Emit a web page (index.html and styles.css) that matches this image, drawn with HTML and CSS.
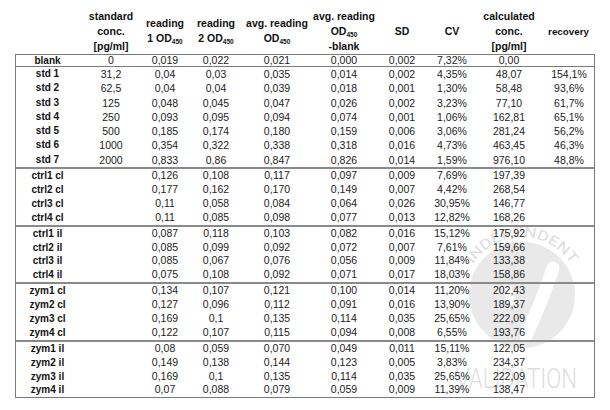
FILE: index.html
```html
<!DOCTYPE html>
<html>
<head>
<meta charset="utf-8">
<link rel="stylesheet" href="styles.css">
</head>
<body>
<div class="sheet">
  <div class="cols head">
    <div></div>
    <div>standard<br>conc.<br>[pg/ml]</div>
    <div>reading<br>1 OD<span class="sub">450</span></div>
    <div>reading<br>2 OD<span class="sub">450</span></div>
    <div>avg. reading<br>OD<span class="sub">450</span></div>
    <div>avg. reading<br>OD<span class="sub">450</span><br>-blank</div>
    <div>SD</div>
    <div>CV</div>
    <div>calculated<br>conc.<br>[pg/ml]</div>
    <div class="rec">recovery</div>
  </div>
  <div class="table">
    <div class="group blank">
      <div class="cols row"><div>blank</div><div>0</div><div>0,019</div><div>0,022</div><div>0,021</div><div>0,000</div><div>0,002</div><div>7,32%</div><div>0,00</div><div></div></div>
    </div>
    <div class="group std">
      <div class="cols row"><div>std 1</div><div>31,2</div><div>0,04</div><div>0,03</div><div>0,035</div><div>0,014</div><div>0,002</div><div>4,35%</div><div>48,07</div><div>154,1%</div></div>
      <div class="cols row"><div>std 2</div><div>62,5</div><div>0,04</div><div>0,04</div><div>0,039</div><div>0,018</div><div>0,001</div><div>1,30%</div><div>58,48</div><div>93,6%</div></div>
      <div class="cols row"><div>std 3</div><div>125</div><div>0,048</div><div>0,045</div><div>0,047</div><div>0,026</div><div>0,002</div><div>3,23%</div><div>77,10</div><div>61,7%</div></div>
      <div class="cols row"><div>std 4</div><div>250</div><div>0,093</div><div>0,095</div><div>0,094</div><div>0,074</div><div>0,001</div><div>1,06%</div><div>162,81</div><div>65,1%</div></div>
      <div class="cols row"><div>std 5</div><div>500</div><div>0,185</div><div>0,174</div><div>0,180</div><div>0,159</div><div>0,006</div><div>3,06%</div><div>281,24</div><div>56,2%</div></div>
      <div class="cols row"><div>std 6</div><div>1000</div><div>0,354</div><div>0,322</div><div>0,338</div><div>0,318</div><div>0,016</div><div>4,73%</div><div>463,45</div><div>46,3%</div></div>
      <div class="cols row"><div>std 7</div><div>2000</div><div>0,833</div><div>0,86</div><div>0,847</div><div>0,826</div><div>0,014</div><div>1,59%</div><div>976,10</div><div>48,8%</div></div>
    </div>
    <div class="group sep">
      <div class="cols row"><div>ctrl1 cl</div><div></div><div>0,126</div><div>0,108</div><div>0,117</div><div>0,097</div><div>0,009</div><div>7,69%</div><div>197,39</div><div></div></div>
      <div class="cols row"><div>ctrl2 cl</div><div></div><div>0,177</div><div>0,162</div><div>0,170</div><div>0,149</div><div>0,007</div><div>4,42%</div><div>268,54</div><div></div></div>
      <div class="cols row"><div>ctrl3 cl</div><div></div><div>0,11</div><div>0,058</div><div>0,084</div><div>0,064</div><div>0,026</div><div>30,95%</div><div>146,77</div><div></div></div>
      <div class="cols row"><div>ctrl4 cl</div><div></div><div>0,11</div><div>0,085</div><div>0,098</div><div>0,077</div><div>0,013</div><div>12,82%</div><div>168,26</div><div></div></div>
    </div>
    <div class="group sep">
      <div class="cols row"><div>ctrl1 il</div><div></div><div>0,087</div><div>0,118</div><div>0,103</div><div>0,082</div><div>0,016</div><div>15,12%</div><div>175,92</div><div></div></div>
      <div class="cols row"><div>ctrl2 il</div><div></div><div>0,085</div><div>0,099</div><div>0,092</div><div>0,072</div><div>0,007</div><div>7,61%</div><div>159,66</div><div></div></div>
      <div class="cols row"><div>ctrl3 il</div><div></div><div>0,085</div><div>0,067</div><div>0,076</div><div>0,056</div><div>0,009</div><div>11,84%</div><div>133,38</div><div></div></div>
      <div class="cols row"><div>ctrl4 il</div><div></div><div>0,075</div><div>0,108</div><div>0,092</div><div>0,071</div><div>0,017</div><div>18,03%</div><div>158,86</div><div></div></div>
    </div>
    <div class="group sep">
      <div class="cols row"><div>zym1 cl</div><div></div><div>0,134</div><div>0,107</div><div>0,121</div><div>0,100</div><div>0,014</div><div>11,20%</div><div>202,43</div><div></div></div>
      <div class="cols row"><div>zym2 cl</div><div></div><div>0,127</div><div>0,096</div><div>0,112</div><div>0,091</div><div>0,016</div><div>13,90%</div><div>189,37</div><div></div></div>
      <div class="cols row"><div>zym3 cl</div><div></div><div>0,169</div><div>0,1</div><div>0,135</div><div>0,114</div><div>0,035</div><div>25,65%</div><div>222,09</div><div></div></div>
      <div class="cols row"><div>zym4 cl</div><div></div><div>0,122</div><div>0,107</div><div>0,115</div><div>0,094</div><div>0,008</div><div>6,55%</div><div>193,76</div><div></div></div>
    </div>
    <div class="group sep">
      <div class="cols row"><div>zym1 il</div><div></div><div>0,08</div><div>0,059</div><div>0,070</div><div>0,049</div><div>0,011</div><div>15,11%</div><div>122,05</div><div></div></div>
      <div class="cols row"><div>zym2 il</div><div></div><div>0,149</div><div>0,138</div><div>0,144</div><div>0,123</div><div>0,005</div><div>3,83%</div><div>234,37</div><div></div></div>
      <div class="cols row"><div>zym3 il</div><div></div><div>0,169</div><div>0,1</div><div>0,135</div><div>0,114</div><div>0,035</div><div>25,65%</div><div>222,09</div><div></div></div>
      <div class="cols row"><div>zym4 il</div><div></div><div>0,07</div><div>0,088</div><div>0,079</div><div>0,059</div><div>0,009</div><div>11,39%</div><div>138,47</div><div></div></div>
    </div>
  </div>
  <svg class="stamp" viewBox="440 200 170 210" width="170" height="210">
    <defs>
      <path id="arc" d="M 472.8 264.3 A 58 58 0 0 1 571.2 264.3"/>
    </defs>
    <circle cx="522" cy="295" r="53" fill="#e9e9e9"/>
    <path d="M 553 268 C 546 290, 536 314, 526 336" stroke="#fff" stroke-width="13" stroke-linecap="round" fill="none"/>
    <path d="M 508 289 L 511 301" stroke="#fff" stroke-width="8" stroke-linecap="round" fill="none"/>
    <text class="arc-text"><textPath href="#arc" textLength="117" lengthAdjust="spacingAndGlyphs">INDEPENDENT</textPath></text>
    <text class="val-text" x="456" y="388" textLength="121" lengthAdjust="spacingAndGlyphs">VALIDATION</text>
  </svg>
</div>
</body>
</html>
```
FILE: styles.css
```css
body {
  margin: 0;
  background: #fff;
  font-family: "Liberation Sans", Arial, sans-serif;
  color: #1c1c1c;
}

.sheet {
  position: relative;
  width: 610px;
  height: 410px;
  padding: 8px 0 0 15px;
  box-sizing: border-box;
}

.cols {
  display: grid;
  grid-template-columns: 63px 64px 44px 58px 64px 70px 46px 54px 60px 55px;
}

.head {
  height: 46px;
  margin-left: 1px;
  align-items: center;
  font-weight: bold;
  font-size: 10.5px;
  line-height: 15px;
  text-align: center;
  color: #111;
}

.head .rec {
  font-size: 9.8px;
  padding-left: 4px;
}

.sub {
  font-size: 6.5px;
  line-height: 0;
  vertical-align: -2px;
}

.table {
  width: 580px;
  border: 1px solid #7a7a7a;
  box-sizing: border-box;
}

.row {
  height: 13.9px;
  line-height: 13.9px;
  font-size: 10.5px;
  text-align: center;
  white-space: nowrap;
}

.row > :first-child {
  font-weight: bold;
  font-size: 10px;
  color: #111;
}

.row > :last-child {
  padding-left: 5px;
}

.blank .row {
  height: 11px;
  line-height: 11px;
}

.std {
  border-top: 1px solid #7a7a7a;
}

.std .row {
  height: 14.3px;
  line-height: 14.3px;
}

.sep {
  border-top: 2px solid #8a8a8a;
}

.stamp {
  position: absolute;
  left: 440px;
  top: 200px;
  z-index: -1;
  pointer-events: none;
}

.arc-text {
  font-family: Roboto, "Liberation Sans", sans-serif;
  font-size: 14px;
  fill: #dcdcdc;
}

.val-text {
  font-family: Roboto, "Liberation Sans", sans-serif;
  font-weight: 300;
  font-size: 28px;
  fill: #dedede;
}
```
